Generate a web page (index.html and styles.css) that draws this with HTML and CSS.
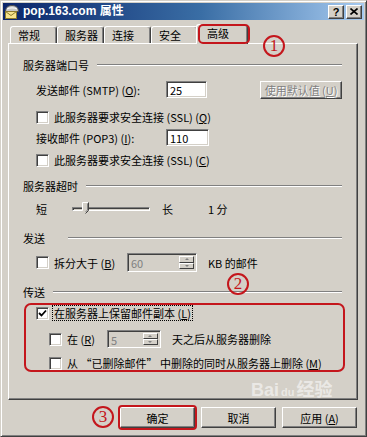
FILE: index.html
```html
<!DOCTYPE html>
<html>

<head>
    <title>pop.163.com 属性</title>
    <link rel="stylesheet" href="styles.css">
</head>

<body>
    <div class="window">
        <div class="titlebar">
            <svg class="title-icon" width="16" height="14" viewBox="0 0 16 14">
                <path d="M1.5 6.5 C1.5 2 5 0.5 8 0.5 C11 0.5 14.5 2 14.5 6.5 Z" fill="#c8c8c8" stroke="#505050"/>
                <path d="M3 4 C5 2.5 11 2.5 13 4" fill="none" stroke="#fff"/>
                <rect x="1.5" y="6.5" width="11" height="7" fill="#f6e48c" stroke="#8c7a2c"/>
                <path d="M1.5 6.5 L7 10.5 L12.5 6.5" fill="none" stroke="#8c7a2c"/>
            </svg>
            <span class="title-text">pop.163.com 属性</span>
            <div class="caption-btns">
                <span class="cap-btn">?</span>
                <span class="cap-btn cap-close">
                    <svg width="8" height="7" viewBox="0 0 8 7"><path d="M0.5 0.5 L7.5 6.5 M7.5 0.5 L0.5 6.5" stroke="#000" stroke-width="1.6"/></svg>
                </span>
            </div>
        </div>

        <div class="main">
            <div class="tabs">
                <div class="tab">常规</div>
                <div class="tab">服务器</div>
                <div class="tab">连接</div>
                <div class="tab">安全</div>
                <div class="tab active">高级</div>
            </div>

            <div class="panel">
                <div class="group-title"><span>服务器端口号</span><i class="etch"></i></div>
                <div class="row port-row first-port">
                    <span class="port-label">发送邮件 (SMTP) (<u>O</u>):</span>
                    <span class="textbox">25</span>
                    <span class="btn btn-default-val">使用默认值 (<u>U</u>)</span>
                </div>
                <div class="row check-row ssl-1">
                    <span class="cb"></span>
                    <span>此服务器要求安全连接 (SSL) (<u>Q</u>)</span>
                </div>
                <div class="row port-row second-port">
                    <span class="port-label">接收邮件 (POP3) (<u>I</u>):</span>
                    <span class="textbox">110</span>
                </div>
                <div class="row check-row ssl-2">
                    <span class="cb"></span>
                    <span>此服务器要求安全连接 (SSL) (<u>C</u>)</span>
                </div>

                <div class="group-title timeout-title"><span>服务器超时</span><i class="etch"></i></div>
                <div class="row slider-row">
                    <span>短</span>
                    <div class="track">
                        <svg class="thumb" width="7" height="12" viewBox="0 0 7 12">
                            <path d="M0.5 0.5 H6.5 V8.5 L3.5 11.5 L0.5 8.5 Z" fill="#d4d0c8"/>
                            <path d="M0.5 8.5 V0.5 H6" fill="none" stroke="#fff"/>
                            <path d="M6.5 0.5 V8.5 L3.5 11.5" fill="none" stroke="#404040"/>
                            <path d="M5.5 1.5 V8 L3.5 10" fill="none" stroke="#808080"/>
                        </svg>
                    </div>
                    <span class="long">长</span>
                    <span class="minutes">1 分</span>
                </div>

                <div class="group-title send-title"><span>发送</span><i class="etch"></i></div>
                <div class="row check-row split-row">
                    <span class="cb"></span>
                    <span class="split-label">拆分大于 (<u>B</u>)</span>
                    <span class="spinner spinner-kb">
                        <span class="spin-value">60</span>
                        <span class="spin-btns">
                            <span class="spin-btn"><i class="arrow-up"></i></span>
                            <span class="spin-btn"><i class="arrow-down"></i></span>
                        </span>
                    </span>
                    <span class="kb-text">KB 的邮件</span>
                </div>

                <div class="group-title deliver-title"><span>传送</span><i class="etch"></i></div>
                <div class="deliver-box">
                    <div class="row check-row keep-row">
                        <span class="cb checked">
                            <svg width="9" height="9" viewBox="0 0 9 9"><path d="M1 4 L3.5 6.5 L8 1.5" fill="none" stroke="#000" stroke-width="1.8"/></svg>
                        </span>
                        <span class="focus-text">在服务器上保留邮件副本 (<u>L</u>)</span>
                    </div>
                    <div class="row check-row sub-row days-row">
                        <span class="cb"></span>
                        <span class="days-label">在 (<u>R</u>)</span>
                        <span class="spinner spinner-days">
                            <span class="spin-value">5</span>
                            <span class="spin-btns">
                                <span class="spin-btn"><i class="arrow-up"></i></span>
                                <span class="spin-btn"><i class="arrow-down"></i></span>
                            </span>
                        </span>
                        <span class="days-text">天之后从服务器删除</span>
                    </div>
                    <div class="row check-row sub-row purge-row">
                        <span class="cb"></span>
                        <span>从 “已删除邮件” 中删除的同时从服务器上删除 (<u>M</u>)</span>
                    </div>
                </div>
            </div>

            <div class="buttons">
                <span class="btn btn-ok">确定</span>
                <span class="btn">取消</span>
                <span class="btn">应用 (<u>A</u>)</span>
            </div>
        </div>

        <span class="mark mark-1">1</span>
        <span class="mark mark-2">2</span>
        <span class="mark mark-3">3</span>

        <div class="watermark">Bai<span class="paw">du</span>经验</div>
    </div>
</body>

</html>
```

FILE: styles.css
```css
body {
    margin: 0;
    font-family: "Noto Sans CJK SC", sans-serif;
    font-size: 11px;
    color: #000;
    background-color: #d4d0c8;
}

.window {
    position: relative;
    width: 367px;
    height: 437px;
    box-sizing: border-box;
    border: 1px solid;
    border-color: #d4d0c8 #404040 #404040 #d4d0c8;
    padding: 2px;
    box-shadow: inset 1px 1px #fff, inset -1px -1px #808080;
    background-color: #d4d0c8;
    display: flex;
    flex-direction: column;
    overflow: hidden;
}

/* title bar */
.titlebar {
    height: 17px;
    flex: none;
    display: flex;
    align-items: center;
    padding: 0 2px 0 1px;
    background: linear-gradient(to right, #0a246a, #3a6ea5 55%, #a6caf0);
}

.title-icon {
    flex: none;
    margin-right: 3px;
}

.title-text {
    flex: 1;
    color: #fff;
    font-family: "Liberation Sans", "Noto Sans CJK SC", sans-serif;
    font-weight: bold;
    font-size: 12px;
    line-height: 17px;
}

.caption-btns {
    display: flex;
    gap: 2px;
}

.cap-btn {
    width: 16px;
    height: 14px;
    box-sizing: border-box;
    border: 1px solid;
    border-color: #fff #404040 #404040 #fff;
    box-shadow: inset -1px -1px #808080;
    background-color: #d4d0c8;
    display: flex;
    justify-content: center;
    align-items: center;
    font-family: "Liberation Sans", sans-serif;
    font-weight: bold;
    font-size: 11px;
    line-height: 12px;
}

/* tabs */
.main {
    flex: 1;
    display: flex;
    flex-direction: column;
    padding: 0 6px 0 5px;
}

.tabs {
    height: 23px;
    flex: none;
    display: flex;
    align-items: flex-end;
    padding-left: 2px;
    position: relative;
    z-index: 1;
}

.tab {
    width: 47px;
    height: 17px;
    box-sizing: border-box;
    border: 1px solid;
    border-color: #fff #404040 transparent #fff;
    border-bottom: none;
    border-radius: 3px 3px 0 0;
    box-shadow: inset -1px 0 #808080;
    padding: 1px 0 0 7px;
    line-height: 15px;
}

.tab.active {
    position: relative;
    width: 52px;
    height: 20px;
    margin: 0 0 -1px -2px;
    padding: 1px 0 0 10px;
    background-color: #d4d0c8;
}

.tab.active::after {
    content: "";
    position: absolute;
    left: 1px;
    top: -1px;
    right: -3px;
    bottom: 0;
    border: 2px solid #c4161c;
    border-radius: 5px;
}

/* panel */
.panel {
    height: 357px;
    flex: none;
    box-sizing: border-box;
    border: 1px solid;
    border-color: #fff #404040 #404040 #fff;
    box-shadow: inset -1px -1px #808080;
    padding: 14px 15px 0 14px;
}

.group-title {
    height: 14px;
    display: flex;
    align-items: center;
    line-height: 14px;
}

.etch {
    flex: 1;
    height: 0;
    border-top: 1px solid #808080;
    border-bottom: 1px solid #fff;
    margin-left: 8px;
}

.timeout-title { margin-top: 12px; }
.send-title { margin-top: 14px; }
.send-title .etch { margin-left: 23px; }
.deliver-title { margin-top: 12px; }

.row {
    display: flex;
    align-items: center;
    padding-left: 13px;
    line-height: 14px;
}

.port-row { height: 19px; }
.first-port { margin-top: 8px; }
.ssl-1 { margin-top: 11px; }
.second-port { margin-top: 4px; }
.ssl-2 { margin-top: 6px; }

.port-label {
    width: 130px;
    flex: none;
}

.textbox {
    width: 43px;
    height: 17px;
    box-sizing: border-box;
    border: 1px solid;
    border-color: #808080 #fff #fff #808080;
    box-shadow: inset 1px 1px #404040, inset -1px -1px #d4d0c8;
    background-color: #fff;
    padding: 1px 0 0 3px;
    line-height: 14px;
}

.btn {
    width: 75px;
    height: 21px;
    box-sizing: border-box;
    border: 1px solid;
    border-color: #fff #404040 #404040 #fff;
    box-shadow: inset -1px -1px #808080;
    display: flex;
    justify-content: center;
    align-items: center;
    line-height: 14px;
}

.btn-default-val {
    width: 86px;
    height: 18px;
    margin-left: 53px;
    color: #808080;
    text-shadow: 1px 1px #fff;
}

.check-row { height: 14px; }

.cb {
    width: 13px;
    height: 13px;
    flex: none;
    box-sizing: border-box;
    border: 1px solid;
    border-color: #808080 #fff #fff #808080;
    box-shadow: inset 1px 1px #404040, inset -1px -1px #d4d0c8;
    background-color: #fff;
    margin-right: 5px;
    display: flex;
    justify-content: center;
    align-items: center;
}

/* slider */
.slider-row {
    height: 16px;
    margin-top: 8px;
}

.track {
    position: relative;
    width: 78px;
    height: 4px;
    box-sizing: border-box;
    margin-left: 25px;
    border: 1px solid;
    border-color: #808080 #fff #fff #808080;
    box-shadow: inset 1px 1px #404040;
    background-color: #d4d0c8;
}

.thumb {
    position: absolute;
    left: 9px;
    top: -6px;
}

.long { margin-left: 12px; }
.minutes { margin-left: 35px; }

/* spinners */
.split-row {
    height: 21px;
    margin-top: 7px;
}

.split-label {
    width: 73px;
    flex: none;
}

.spinner {
    display: flex;
    box-sizing: border-box;
    border: 1px solid;
    border-color: #808080 #fff #fff #808080;
    box-shadow: inset 1px 1px #404040, inset -1px -1px #d4d0c8;
    background-color: #d4d0c8;
    padding: 2px;
    color: #808080;
}

.spinner-kb {
    width: 70px;
    height: 19px;
}

.spinner-days {
    width: 54px;
    height: 18px;
    margin-left: 12px;
}

.spin-value {
    flex: 1;
    line-height: 14px;
    padding-left: 1px;
}

.spin-btns {
    width: 15px;
    display: flex;
    flex-direction: column;
}

.spin-btn {
    flex: 1;
    box-sizing: border-box;
    border: 1px solid;
    border-color: #fff #404040 #404040 #fff;
    display: flex;
    justify-content: center;
    align-items: center;
}

.arrow-up,
.arrow-down {
    width: 0;
    height: 0;
    border-left: 2px solid transparent;
    border-right: 2px solid transparent;
}

.arrow-up { border-bottom: 2px solid #808080; }
.arrow-down { border-top: 2px solid #808080; }

.kb-text { margin-left: 11px; }

/* deliver group */
.deliver-box {
    margin: 4px -3px 0 1px;
    height: 69px;
    box-sizing: border-box;
    border: 2px solid #c4161c;
    border-radius: 7px;
    padding: 1px 0 0 10px;
}

.deliver-box .row { padding-left: 0; }

.keep-row { height: 14px; }

.focus-text {
    outline: 1px dotted #000;
    outline-offset: 0;
    padding: 0 1px;
    margin-left: -1px;
}

.deliver-box .sub-row { padding-left: 13px; }

.days-row {
    height: 18px;
    margin-top: 10px;
}

.days-text { margin-left: 11px; }

.purge-row { margin-top: 8px; }

/* buttons */
.buttons {
    display: flex;
    justify-content: flex-end;
    gap: 6px;
    margin-top: 7px;
    padding-right: 1px;
}

.btn-ok {
    position: relative;
}

.btn-ok::after {
    content: "";
    position: absolute;
    left: -3px;
    top: -3px;
    right: -3px;
    bottom: -3px;
    border: 2px solid #c4161c;
    border-radius: 4px;
}

/* annotations */
.mark {
    position: absolute;
    width: 22px;
    height: 22px;
    box-sizing: border-box;
    border: 2px solid #c4161c;
    border-radius: 50%;
    color: #c4161c;
    font-family: "Liberation Serif", serif;
    font-size: 17px;
    line-height: 18px;
    text-align: center;
}

.mark-1 { left: 262px; top: 34px; }
.mark-2 { left: 226px; top: 272px; }
.mark-3 { left: 91px; top: 405px; }

.watermark {
    position: absolute;
    left: 250px;
    top: 378px;
    color: rgba(255, 255, 255, 0.55);
    font-family: "Liberation Sans", "Noto Sans CJK SC", sans-serif;
    font-weight: bold;
    font-size: 18px;
    line-height: 22px;
    pointer-events: none;
}

.paw {
    font-size: 11px;
    margin: 0 2px;
}
```
